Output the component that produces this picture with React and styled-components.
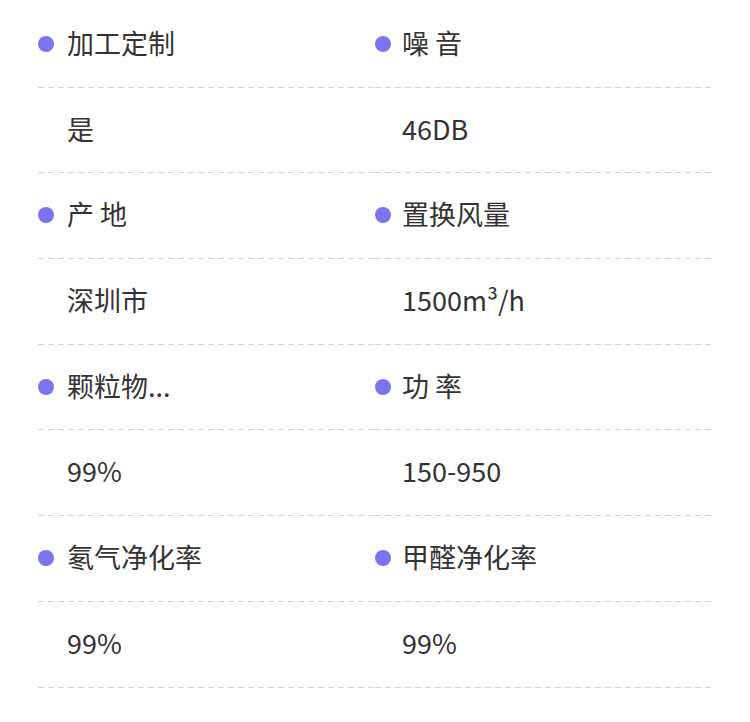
import React from "react";
import styled, {createGlobalStyle} from "styled-components";

const GlobalStyle = createGlobalStyle`
  html, body {
    margin: 0;
    padding: 0;
    background: #ffffff;
  }
  body {
    font-family: "Noto Sans CJK SC", "Noto Sans", sans-serif;
    color: #333333;
  }
`;

const Wrapper = styled.div`
  padding: 2px 0 0 38px;
  width: 750px;
  box-sizing: border-box;
`;

const Grid = styled.div`
  display: grid;
  grid-template-columns: 337px 339px;
`;

const Cell = styled.div`
  height: 85.7px;
  box-sizing: border-box;
  display: flex;
  align-items: center;
  gap: ${(p) => (p.$right ? "11px" : "13px")};
  padding-left: ${(p) => (p.$value ? (p.$right ? "27px" : "29px") : "0")};
  padding-bottom: 5px;
  font-size: 27px;
  line-height: 1;
  color: #333333;
  background-image: linear-gradient(to right, #d2d2d2 6px, transparent 6px);
  background-size: 10px 1px;
  background-repeat: repeat-x;
  background-position: left bottom;
`;

const Dot = styled.span`
  width: 16px;
  height: 16px;
  border-radius: 50%;
  background: #7b73f0;
  flex-shrink: 0;
  margin-top: 3px;
`;

const specs = [
    ["加工定制", "是", "噪 音", "46DB"],
    ["产 地", "深圳市", "置换风量", "1500m³/h"],
    ["颗粒物...", "99%", "功 率", "150-950"],
    ["氡气净化率", "99%", "甲醛净化率", "99%"],
];

export default function App() {
    return (
        <>
            <GlobalStyle/>
            <Wrapper>
                <Grid>
                    {specs.map(([l1, v1, l2, v2]) => (
                        <React.Fragment key={l1}>
                            <Cell><Dot/>{l1}</Cell>
                            <Cell $right><Dot/>{l2}</Cell>
                            <Cell $value>{v1}</Cell>
                            <Cell $value $right>{v2}</Cell>
                        </React.Fragment>
                    ))}
                </Grid>
            </Wrapper>
        </>
    );
}
